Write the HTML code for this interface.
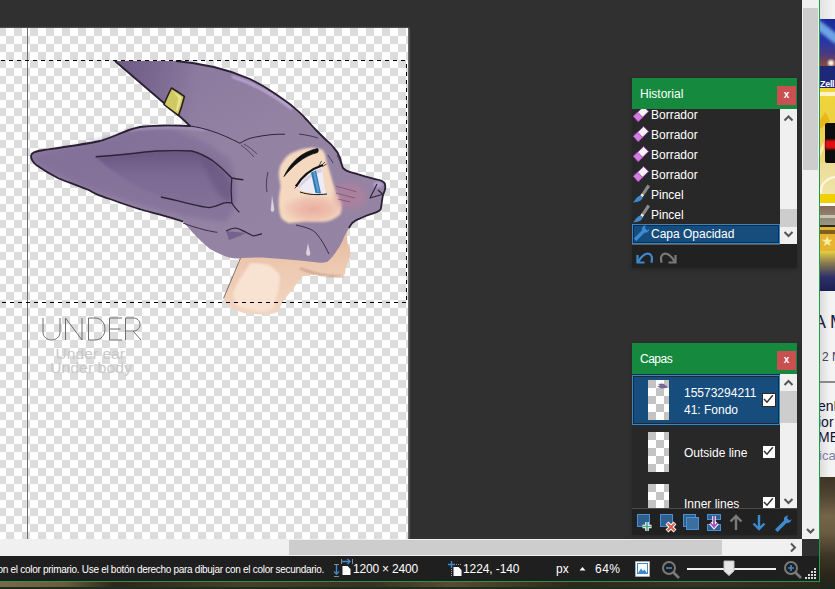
<!DOCTYPE html>
<html><head><meta charset="utf-8">
<style>
*{margin:0;padding:0;box-sizing:border-box}
html,body{width:835px;height:589px;overflow:hidden;background:#3a3526;font-family:"Liberation Sans",sans-serif}
.a{position:absolute}
#ws{left:0;top:0;width:802px;height:539px;background:#303030;overflow:hidden}
#canvas{left:-2px;top:28px;width:410px;height:511px;
 background-color:#dcdcdc;
 background-image:linear-gradient(45deg,#fff 25%,transparent 25%,transparent 75%,#fff 75%),linear-gradient(45deg,#fff 25%,transparent 25%,transparent 75%,#fff 75%);
 background-size:16px 16px;background-position:0 0,8px 8px;
 box-shadow:0 0 2px 0.5px rgba(200,200,200,.55)}
#vscroll{left:802px;top:0;width:17px;height:539px;background:#f0f0f0}
#hscroll{left:0;top:539px;width:802px;height:17px;background:#f0f0f0}
#corner{left:802px;top:539px;width:17px;height:17px;background:#303030}
#status{left:0;top:556px;width:819px;height:25px;background:#1f1f1f;overflow:hidden}
.st{color:#fff;white-space:nowrap;line-height:16px}
#gline{left:0;top:581px;width:820px;height:1px;background:#1e9a48}
#gvline{left:819px;top:0;width:1px;height:582px;background:#1e9a48}
.panel{background:#2a2a2a}
.hdr{background:#158a3e;color:#fff;font-size:12px;height:31px;line-height:33px;padding-left:8px}
.close{width:19px;height:19px;background:#c94f50;color:#fff;font-size:10px;font-weight:bold;text-align:center;line-height:18px}
.item{height:20px;font-size:12px;color:#fff;line-height:22px;padding-left:19px;white-space:nowrap}
.sel{background:#174d7c;border:1px solid #2b8ad6;box-shadow:inset 0 0 0 1px #1c2a36}
.thumb{width:21px;height:40px;background-color:#c4c4c4;background-image:linear-gradient(45deg,#fff 25%,transparent 25%,transparent 75%,#fff 75%),linear-gradient(45deg,#fff 25%,transparent 25%,transparent 75%,#fff 75%);background-size:16px 16px;background-position:0 0,8px 8px}
.lt{font-size:12px;color:#fff;white-space:nowrap;line-height:14px}
.cb{width:12px;height:12px;background:#fff;outline:1px solid #2a2a2a}
.wt{white-space:nowrap;line-height:16px}
</style></head><body>
<div id="ws" class="a">
  <div id="canvas" class="a"></div>
</div>

<svg class="a" style="left:0;top:0" width="835" height="589" viewBox="0 0 835 589">
 <defs>
  <linearGradient id="pg" x1="0" y1="0" x2="1" y2="1">
   <stop offset="0" stop-color="#85729b"/><stop offset="0.5" stop-color="#9482a3"/><stop offset="1" stop-color="#9684a4"/>
  </linearGradient>
  <linearGradient id="eg" x1="0" y1="0" x2="1" y2="0">
   <stop offset="0" stop-color="#8a77a0"/><stop offset="1" stop-color="#6c5886"/>
  </linearGradient>
  <linearGradient id="ng" x1="0" y1="0" x2="0" y2="1">
   <stop offset="0" stop-color="#e3b79c"/><stop offset="0.4" stop-color="#ecc7ae"/><stop offset="1" stop-color="#f2d6c2"/>
  </linearGradient>
  <radialGradient id="blush" cx="0.5" cy="0.5" r="0.5">
   <stop offset="0" stop-color="#e6a096" stop-opacity="0.75"/><stop offset="0.6" stop-color="#e6a096" stop-opacity="0.4"/><stop offset="1" stop-color="#e6a096" stop-opacity="0"/>
  </radialGradient>
  <linearGradient id="spg" gradientUnits="userSpaceOnUse" x1="130" y1="75" x2="198" y2="85">
   <stop offset="0" stop-color="#6e5b85" stop-opacity="0.85"/><stop offset="1" stop-color="#6e5b85" stop-opacity="0"/>
  </linearGradient>
  <linearGradient id="ieg" gradientUnits="userSpaceOnUse" x1="0" y1="152" x2="0" y2="205">
   <stop offset="0" stop-color="#66537f" stop-opacity="0.95"/><stop offset="0.45" stop-color="#76638f" stop-opacity="0.6"/><stop offset="1" stop-color="#7a6892" stop-opacity="0.3"/>
  </linearGradient>
  <filter id="blur1"><feGaussianBlur stdDeviation="1.2"/></filter>
  <filter id="blur2"><feGaussianBlur stdDeviation="2.5"/></filter>
 </defs>
 <g>
 <!-- lower face + neck peach -->
 <path d="M349,225 C346,232 347,240 348,245 C351,250 351,256 349,260 C346,265 345,270 345,274 C343,277 339,277 330,276 C318,274 310,275 303,276 C295,286 287,296 282,303 C280,308 279,311 278,312 C272,314 268,314.5 264,314.5 C255,314.5 250,314 246,313.6 C240,312 235,310 231.6,308.3 C228,305 225,301 223.5,298.4 C230,284 236,270 241.4,256 L300,250 Z" fill="url(#ng)"/>
 <path d="M251,263 C258,263 264,264 269,265 C274,268 278,272 280,276 C280,282 279,287 278,292 C276,298 275,303 273,308 C269,310 265,311 260,312 C252,310 244,308 237,306 C235,302 234,298 233,294 C235,287 238,281 242,276 C245,271 248,266 251,263 Z" fill="#f8e2d2" filter="url(#blur1)"/>
 <path d="M300,268 C310,273 325,276 343,277" fill="none" stroke="#c8937a" stroke-width="1.5" filter="url(#blur1)"/>
 <path d="M223.5,298.4 L241.4,256" fill="none" stroke="#6b4b40" stroke-width="0.8"/>
 <!-- main purple silhouette -->
 <path d="M183,221.6 C176,219 168,217 160,214.7 C150,212 142,210 136,208 C130,206 127,205 124,204 C115,201 107,198 100,195.6 C95,194 91,191 87.5,189.5 C78,186 68,182 58.7,178.5 C50,174 42,169 37,165.5 C33,162.5 31,159 31,156 C31,153 36,151 44,150 C58,148 80,145 100,141 C112,138 125,130 140,127 C155,125 172,125 190,126 C180,116 170,108 165,104 L115,61 L176,61 C200,63 225,68 250,79 C260,84 265,87 271,91 C280,97 286,101 291,105 C298,111 302,114 305,118 C309,122 312,126 316,130 C320,134 323,137 326,140 C330,143 332,145 334,148 C337,151 339,155 340,158 C341,162 342,166 343,168 C345,170 347,171 348.1,171.3 C354,173 360,175 365.8,176.7 C371,178 375,179 379.4,180.1 C382,181 384,182 384.8,183.5 C385.5,186 385.5,188 384.8,190.3 C384,192 383.5,194 382.8,195.8 C382,200 381.5,205 380.7,209.4 C379.5,211 378,211.5 376.6,212.1 C374,213 371,214 368.5,214.8 C365,216 362,217.5 359,218.9 C356,220 354,221.5 352.2,223 C351,224.5 350,226 349,228 C346,233 344,236 343,240 C340,246 338,249 336,252 C333,256 330,260 327,262 C322,263 320,263 318,262.5 C305,261 294,260 282,259 C268,257.5 255,257 242,258 C235,259 230,258 224.6,256 C218,253 214,251 210,249 C205,245 202,242 198.7,238.8 C195,235 193,233 191.6,231.6 C188,227 185,224 183,221.6 Z" fill="url(#pg)"/>
 <!-- spike darker -->
 <path d="M115,61 L176,61 C190,62 205,63 225,68 C215,90 205,110 195,128 L190,126 C180,116 170,108 165,104 Z" fill="url(#spg)"/>
 <!-- ear darker tone -->
 <path d="M31,156 C60,150 100,141 140,128 C170,126 200,135 230,160 C240,190 238,210 225,222 C190,218 150,210 85,187 C55,174 38,165 31,156 Z" fill="#7c6994" opacity="0.55" filter="url(#blur2)"/>
 <!-- top highlight -->
 <path d="M232,76.5 C248,81.5 262,89 271,94.5 C280,100 286,104 292,109" fill="none" stroke="#c6b2e2" stroke-width="2.2" filter="url(#blur1)"/>
 <path d="M125,131 C150,127 180,126 205,130" fill="none" stroke="#a996bf" stroke-width="2" filter="url(#blur1)"/>
 <!-- inner ear dark -->
 <path d="M95.7,156.8 C110,156 120,155 128.3,154 C140,152.5 148,151.5 157,151 C170,150.5 182,150.5 191.5,151 C200,153 207,157 212.6,160.7 C220,166 226,172 231.8,178 C231,185 231,195 231.8,202.8 C227,202.6 224,202.8 224.1,202.8 C220,204.5 215,207 208.8,207.6 C202,207 195,205 185.8,202.8 C178,201 170,199 160.9,197 C130,185 110,170 95.7,156.8 Z" fill="url(#ieg)" filter="url(#blur1)"/>
 <path d="M200,155 C215,162 228,175 232,185 C231,192 231,198 232,203 C222,200 212,190 200,155 Z" fill="#68557f" opacity="0.6" filter="url(#blur2)"/>
 <!-- outline -->
 <path d="M183,221.6 C176,219 168,217 160,214.7 C150,212 142,210 136,208 C130,206 127,205 124,204 C115,201 107,198 100,195.6 C95,194 91,191 87.5,189.5 C78,186 68,182 58.7,178.5 C50,174 42,169 37,165.5 C33,162.5 31,159 31,156 C31,153 36,151 44,150 C58,148 80,145 100,141 C112,138 125,130 140,127 C155,125 172,125 190,126 C180,116 170,108 165,104 L115,61 M176,61 C200,63 225,68 250,79 C260,84 265,87 271,91 C280,97 286,101 291,105 C298,111 302,114 305,118 C309,122 312,126 316,130 C320,134 323,137 326,140 C330,143 332,145 334,148 C337,151 339,155 340,158 C341,162 342,166 343,168 C345,170 347,171 348.1,171.3 C354,173 360,175 365.8,176.7 C371,178 375,179 379.4,180.1 C382,181 384,182 384.8,183.5 C385.5,186 385.5,188 384.8,190.3 C384,192 383.5,194 382.8,195.8 C382,200 381.5,205 380.7,209.4 C379.5,211 378,211.5 376.6,212.1 C374,213 371,214 368.5,214.8 C365,216 362,217.5 359,218.9 C356,220 354,221.5 352.2,223 C351,224.5 350,226 349,228" fill="none" stroke="#2a1f33" stroke-width="1.8" stroke-linejoin="round"/>
 <path d="M95.7,156.8 C110,156 120,155 128.3,154 C140,152.5 148,151.5 157,151 C170,150.5 182,150.5 191.5,151 C200,153 207,157 212.6,160.7 C220,166 226,172 231.8,178 C236,179 240,179.5 243.3,179.8" fill="none" stroke="#2e2236" stroke-width="1.4"/>
 <path d="M231.8,178 C231,185 231,195 231.8,202.8 C234,207 237,210 239.4,212.4" fill="none" stroke="#2e2236" stroke-width="1.2"/>
 <path d="M160.9,197 C170,199 178,201 185.8,202.8 C195,205 202,207 208.8,207.6 C215,207 220,204.5 224.1,202.8 C227,202.5 229.5,202.6 231.8,202.8" fill="none" stroke="#2e2236" stroke-width="1.3"/>
 <path d="M183,223 C190,226 198,228 205,230 C210,231 214,232 217.4,232.3" fill="none" stroke="#3a2c45" stroke-width="1"/>
 <path d="M226,231 C230,229 233,228 236,228 C240,229 243,231 246,232.3 C249,234 251,235 253.4,236 C257,235.5 259,234.5 262,233.8" fill="none" stroke="#2e2236" stroke-width="1.2"/>
 <path d="M226,231 L229,240 L240,236 L246,233 Z" fill="#6c5886" opacity="0.75"/>
 <!-- ear base line inside head -->
 <path d="M190,126 C205,128 220,133 240,143.3" fill="none" stroke="#2e2236" stroke-width="1"/>
 <!-- brow wrinkles -->
 <path d="M239.9,143.3 C245,140 250,138 253.9,137.4 C265,135 275,134 285,134.2" fill="none" stroke="#2e2236" stroke-width="1"/>
 <path d="M241,145 C246,149 250,152 254,157 M244,144 C249,147 253,150 257,154" fill="none" stroke="#3a2c45" stroke-width="0.7"/>
 <path d="M299,134 C306,135 312,136 318,138" fill="none" stroke="#3a2c45" stroke-width="0.9"/>
 <path d="M268,172 C266,180 266,186 267,192" fill="none" stroke="#4a3a55" stroke-width="1"/>
 <!-- face skin patch -->
 <path d="M280.5,165.6 C284,159 288,154 294,152 C300,149.5 305,148 311,147.7 C316,147.5 320,148.5 323,150.3 C325,153 326,157 326.3,160.5 C328,166 330,172 331.4,177.4 C332.5,181 333.5,185 334.8,189.3 C337,194 340,198 341.6,202.9 C342,207 341.5,211 340,214.8 C336,218 331,220.5 326.3,221.6 C319,222 312,221.8 306,221.6 C300,222 294,223 289,223.3 C285,222 282,219.5 280.5,216.5 C279,211 278.5,205 278.8,199.5 C279,195 280,190 280.5,186 C280,182 279,178 278.8,174 C279,171 279.5,168 280.5,165.6 Z" fill="#f4d8c0" filter="url(#blur1)"/>
 <ellipse cx="313" cy="209" rx="32" ry="15" fill="url(#blush)"/>
 <ellipse cx="350" cy="196" rx="16" ry="13" fill="#c27f9a" opacity="0.45" filter="url(#blur2)"/>
 <!-- whisker marks -->
 <path d="M336,186.3 C343,188 350,190 356.3,191.7 M336,193 C343,195 349,196.5 355,198 M338,199 C342,200 346,201 350,202" fill="none" stroke="#7a4a6a" stroke-width="0.9" opacity="0.8"/>
 <!-- nose -->
 <ellipse cx="378" cy="184.5" rx="5" ry="3" fill="#b9a5d2" opacity="0.85" filter="url(#blur1)"/>
 <path d="M377,184 L370,198 L382,194.5" fill="none" stroke="#2e2236" stroke-width="1.1" stroke-linejoin="round"/>
 <path d="M378,190 L382.5,194" fill="none" stroke="#2e2236" stroke-width="1.3"/>
 <path d="M327.7,155 C330,158 332,161 333.2,163.2 M337,155 C339,159 341,163 342,167" fill="none" stroke="#3a2c45" stroke-width="0.8"/>
 <!-- eyebrow -->
 <path d="M284,176.5 C290,163 301,152 317.5,148.5 C318.5,149.5 318.5,151 317.5,152.5 C303,156 293,166 284,176.5 Z" fill="#111" stroke="#111" stroke-width="0.8"/>
 <!-- eye -->
 <path d="M297,185 C303,176 311,170 322,166 C323,175 324,185 326,194 C316,195 306,193 298,189 Z" fill="#efebf5"/>
 <path d="M298,187 C304,178 312,172 321,168 L322,172 C313,175 305,181 299,189 Z" fill="#cfc6dc" opacity="0.7"/>
 <path d="M311,172.5 L316,170.5 L321,193.5 L315.5,193 Z" fill="#2f78b2"/>
 <path d="M313,172 L315,171.5 L319.5,192 L317.5,192.5 Z" fill="#5aa2d6"/>
 <path d="M296,186.5 C302,176 311,169 323,165" fill="none" stroke="#111" stroke-width="2.2"/>
 <path d="M319,166 L321.5,161 M321,166 L325,162 M322.5,166.5 L326.5,164 M297,186 L294.5,188.5 M298,184.5 L295,185.5" stroke="#111" stroke-width="0.7"/>
 <path d="M300,192 C309,195 318,195 327,194" fill="none" stroke="#111" stroke-width="1"/>
 <!-- sweat drops -->
 <path d="M272,195 C273,203 275,208 274,211 C272,213 270,211 271,208 Z" fill="#d8d2dc"/>
 <path d="M308,243 C309,249 311,253 310,255 C308,257 306,255 306,253 Z" fill="#d8d2dc"/>
 <!-- mouth crease -->
 <path d="M296,225 C305,227 312,229 316,233 C322,240 326,248 329,254" fill="none" stroke="#3a2c45" stroke-width="1"/>
 <!-- earring -->
 <path d="M171.5,88 C175,90 181,94 184.4,96.5 C183,102 181,109 178.5,115.5 C174,112 168,108 164,104.5 C166,99 169,93 171.5,88 Z" fill="#cfc964" stroke="#26221a" stroke-width="1.6" stroke-linejoin="round"/>
 <path d="M172.5,91 L181.5,97 C180.5,102 179,107 177.5,111.5 L176,110 C177,105 178,101 178.5,98 Z" fill="#eeea98" opacity="0.8"/>
 </g>
 <!-- guide line -->
 <rect x="27" y="28" width="1" height="511" fill="#707070"/>
 <!-- selection -->
 <line x1="-7" y1="60.5" x2="406" y2="60.5" stroke="#000" stroke-width="1" stroke-dasharray="4 4" stroke-dashoffset="8"/>
 <line x1="-6" y1="302.5" x2="406" y2="302.5" stroke="#000" stroke-width="1" stroke-dasharray="4 4" stroke-dashoffset="8"/>
 <line x1="406.5" y1="60" x2="406.5" y2="302" stroke="#000" stroke-width="1" stroke-dasharray="4 4" stroke-dashoffset="4"/>
 <!-- UNDER text -->
 <g fill="none" stroke="#6e6e6e" stroke-width="1">
  <path d="M43,318 V332 C43,337 47,340 51.5,340 C56,340 60,337 60,332 V318"/>
  <path d="M65.5,340 V318 L82,340 V318"/>
  <path d="M88.5,318 V340 H95 C101,340 105,335 105,329 C105,323 101,318 95,318 Z"/>
  <path d="M122,318 H109.5 V340 H122 M109.5,329 H120.5"/>
  <path d="M125.5,340 V318 H133 C137,318 140,320.5 140,324.5 C140,328.5 137,331 133,331 H125.5 M133,331 L141,340"/>
 </g>
 <text x="55.5" y="358.6" font-family="Liberation Sans" font-size="14.5" fill="#c9c9c9" textLength="69.5" lengthAdjust="spacingAndGlyphs">Under ear</text>
 <text x="50" y="373.3" font-family="Liberation Sans" font-size="14.5" fill="#c9c9c9" textLength="82" lengthAdjust="spacingAndGlyphs">Under body</text>
</svg>
<div id="vscroll" class="a">
  <div class="a" style="left:1px;top:8px;width:15px;height:162px;background:#cdcdcd"></div>
  <svg class="a" style="left:0;top:524px" width="17" height="14"><path d="M5,5 L8.5,8.5 L12,5" fill="none" stroke="#555" stroke-width="2.2"/></svg>
</div>
<div id="hscroll" class="a">
  <div class="a" style="left:289px;top:1px;width:433px;height:15px;background:#cdcdcd"></div>
  <svg class="a" style="left:786px;top:1px" width="16" height="15"><path d="M5,3.5 L9,7.5 L5,11.5" fill="none" stroke="#555" stroke-width="2"/></svg>
</div>
<div id="corner" class="a"></div>
<div id="status" class="a">
  <div class="a st" style="right:495px;top:6px;font-size:10px;letter-spacing:-0.29px">con el color primario. Use el botón derecho para dibujar con el color secundario.</div>
  <svg class="a" style="left:333px;top:0px" width="22" height="24">
    <path d="M8.5,3 V8 M19.5,3 V8 M1,8.5 H6 M1,20.5 H6" stroke="#8a8a8a" stroke-width="1"/>
    <path d="M9,5.5 H17 M14.5,3 L17,5.5 L14.5,8" fill="none" stroke="#3d8ad0" stroke-width="1.3"/>
    <path d="M3.5,9 V18 M1,15.5 L3.5,18 L6,15.5" fill="none" stroke="#3d8ad0" stroke-width="1.3"/>
    <path d="M9.5,10 H14.5 L17.5,13 V19 H9.5 Z" fill="#fff"/>
  </svg>
  <div class="a st" style="left:353px;top:5px;font-size:12px;letter-spacing:-0.2px">1200 × 2400</div>
  <svg class="a" style="left:445px;top:3px" width="20" height="20">
    <path d="M6.5,2 V9 M3,5.5 H10" stroke="#3d8ad0" stroke-width="1.3"/>
    <path d="M11,5.5 H17 M6.5,10 V18" stroke="#9a9a9a" stroke-width="1" stroke-dasharray="1 1"/>
    <path d="M8.5,8 H13.5 L16.5,11 V17 H8.5 Z" fill="#fff"/>
  </svg>
  <div class="a st" style="left:463px;top:5px;font-size:12px;letter-spacing:-0.1px">1224, -140</div>
  <div class="a st" style="left:556px;top:5px;font-size:12px">px</div>
  <svg class="a" style="left:579px;top:10px" width="8" height="6"><path d="M0.5,4.5 L3.5,1 L6.5,4.5 Z" fill="#fff"/></svg>
  <div class="a st" style="left:595px;top:5px;font-size:12px;letter-spacing:0.5px">64%</div>
  <svg class="a" style="left:634px;top:4px" width="18" height="18">
    <rect x="1.5" y="1.5" width="14" height="15" fill="#fff" stroke="#c8c8c8" stroke-width="1" stroke-dasharray="1 1"/>
    <rect x="3.5" y="3.5" width="10" height="10" fill="#fff" stroke="#3d8ad0" stroke-width="1"/>
    <path d="M4,13 L7,8.5 L9,11 L10.5,9.5 L13,13 Z" fill="#3d8ad0"/>
  </svg>
  <svg class="a" style="left:661px;top:4px" width="20" height="20">
    <circle cx="8" cy="8" r="6" fill="none" stroke="#7a7a7a" stroke-width="2"/>
    <path d="M12.5,12.5 L18,18" stroke="#7a7a7a" stroke-width="2.6"/>
    <path d="M5,8 H11" stroke="#3d8ad0" stroke-width="1.6"/>
  </svg>
  <div class="a" style="left:687px;top:12px;width:89px;height:2px;background:#f0f0f0"></div>
  <svg class="a" style="left:723px;top:4px" width="12" height="17">
    <path d="M1,1 H11 V11 L6,15.5 L1,11 Z" fill="#e6e6e6" stroke="#bdbdbd" stroke-width="1"/>
  </svg>
  <svg class="a" style="left:783px;top:4px" width="20" height="20">
    <circle cx="8" cy="8" r="6" fill="none" stroke="#7a7a7a" stroke-width="2"/>
    <path d="M12.5,12.5 L18,18" stroke="#7a7a7a" stroke-width="2.6"/>
    <path d="M5,8 H11 M8,5 V11" stroke="#3d8ad0" stroke-width="1.6"/>
  </svg>
  <svg class="a" style="left:805px;top:11px" width="14" height="14">
    <g fill="#d8d8d8"><rect x="9" y="1" width="2" height="2"/><rect x="6" y="4" width="2" height="2"/><rect x="9" y="4" width="2" height="2"/><rect x="3" y="7" width="2" height="2"/><rect x="6" y="7" width="2" height="2"/><rect x="9" y="7" width="2" height="2"/><rect x="0" y="10" width="2" height="2"/><rect x="3" y="10" width="2" height="2"/><rect x="6" y="10" width="2" height="2"/><rect x="9" y="10" width="2" height="2"/></g>
  </svg>
</div>
<div id="gline" class="a"></div>
<div id="gvline" class="a"></div>

<!-- right web strip -->
<div class="a" style="left:820px;top:0;width:15px;height:589px;background:#3a3426;overflow:hidden">
  <div class="a" style="left:0;top:0;width:15px;height:19px;background:linear-gradient(90deg,#e2e2e2,#f4f4f4)"></div>
  <div class="a" style="left:0;top:19px;width:15px;height:47px;background:linear-gradient(180deg,#1b2a9a 0%,#2336a8 45%,#4a3a80 75%,#8a4a3a 100%)"></div>
  <div class="a" style="left:-6px;top:16px;width:34px;height:9px;background:#7ab8f0;transform:rotate(38deg);transform-origin:0 0;opacity:.85;filter:blur(1.5px)"></div>
  <div class="a" style="left:8px;top:60px;width:6px;height:6px;border-radius:3px;background:#fff6e0;filter:blur(1px)"></div>
  <div class="a" style="left:0;top:66px;width:15px;height:22px;background:#1e2878"></div>
  <div class="a" style="left:0;top:79px;font:bold 9px 'Liberation Sans',sans-serif;color:#fff;line-height:10px;letter-spacing:-0.3px">Zell</div>
  <div class="a" style="left:0;top:88px;width:15px;height:84px;background:linear-gradient(180deg,#f2d638 0%,#ecd040 40%,#ecdc88 100%)"></div>
  <div class="a" style="left:0;top:92px;width:15px;height:4px;background:#fff3c8"></div>
  <div class="a" style="left:0;top:112px;width:10px;height:17px;background:#e8b818;clip-path:polygon(0 45%,55% 0,100% 55%,0 100%)"></div>
  <div class="a" style="left:1px;top:128px;width:3px;height:40px;background:#fff8d8;opacity:.7;transform:rotate(25deg)"></div>
  <div class="a" style="left:5px;top:123px;width:13px;height:40px;background:#0c0c0c;border-radius:2px"></div>
  <div class="a" style="left:5px;top:140px;width:13px;height:9px;background:#e01010;filter:blur(1px)"></div>
  <div class="a" style="left:0;top:163px;width:15px;height:31px;background:linear-gradient(180deg,#ecdc98,#f0e4a8)"></div>
  <div class="a" style="left:0;top:176px;width:34px;height:30px;border-radius:50%;border:2px solid #fff8e0"></div>
  <div class="a" style="left:0;top:194px;width:15px;height:12px;background:#f0d000"></div>
  <div class="a" style="left:0;top:203px;width:15px;height:3px;background:#fff"></div>
  <div class="a" style="left:0;top:206px;width:15px;height:20px;background:linear-gradient(180deg,#8a6a58,#9a9a88)"></div>
  <div class="a" style="left:0;top:215px;width:15px;height:3px;background:#e0e0d0;opacity:.7"></div>
  <div class="a" style="left:0;top:225px;width:15px;height:2px;background:#2a2a20"></div>
  <div class="a" style="left:0;top:227px;width:15px;height:24px;background:#e6b430"></div>
  <div class="a" style="left:0;top:230px;width:15px;height:4px;background:#3a2a10;opacity:.6"></div>
  <div class="a" style="left:1px;top:234px;font-size:14px;color:#f4f0a0;line-height:14px">★</div>
  <div class="a" style="left:0;top:251px;width:15px;height:40px;background:linear-gradient(180deg,#e8d040 0%,#8a7a50 30%,#30306a 65%,#1c2050 100%)"></div>
  <div class="a" style="left:0;top:291px;width:15px;height:186px;background:linear-gradient(90deg,#dcdcdc,#f2f2f2 60%,#f4f4f4)"></div>
  <div class="a wt" style="left:-6px;top:312px;font-size:18px;color:#1a1a40;line-height:20px">A M</div>
  <div class="a wt" style="left:2px;top:349px;font-size:12px;color:#404060">2 N</div>
  <div class="a" style="left:0;top:381px;width:15px;height:2px;background:#8a8a8a"></div>
  <div class="a wt" style="left:-2px;top:399px;font-size:14px;color:#101030;line-height:15.5px">enD<br>ior<br>ME</div>
  <div class="a wt" style="left:-1px;top:448px;font-size:13px;color:#8080a0">ica</div>
  <div class="a" style="left:0;top:477px;width:15px;height:112px;background:linear-gradient(180deg,#3e3426 0%,#4e4230 15%,#746448 35%,#6a5c42 50%,#3e3626 70%,#2a261a 88%,#1c281c 100%)"></div>
</div>
<!-- bottom photo strip -->
<div class="a" style="left:0;top:582px;width:820px;height:7px;background:#1a2e22">
  <div class="a" style="left:0;top:0;width:820px;height:5px;background:linear-gradient(90deg,#7a6848 0%,#6a5a3c 8%,#2e2618 14%,#4a3e28 30%,#3a3020 45%,#5a4a30 55%,#2e2818 70%,#3a3222 85%,#2e2818 100%)"></div>
</div>
<!-- Historial panel -->
<div class="a" style="left:632px;top:78px;width:165px;height:190px;background:#212121;box-shadow:0 1px 4px rgba(0,0,0,.25)">
  <div class="a hdr" style="left:0;top:0;width:165px;">Historial</div>
  <div class="a close" style="left:145px;top:8px;">x</div>
  <div class="a" style="left:0;top:31px;width:148px;height:135px;background:#282828;overflow:hidden">
    <div class="a item" style="top:-5px">Borrador</div>
    <div class="a item" style="top:15px">Borrador</div>
    <div class="a item" style="top:35px">Borrador</div>
    <div class="a item" style="top:55px">Borrador</div>
    <div class="a item" style="top:75px">Pincel</div>
    <div class="a item" style="top:95px">Pincel</div>
    <div class="a item sel" style="top:115px;left:0;width:148px;height:20px;padding-left:18px;line-height:19px">Capa Opacidad</div>
    <svg class="a" style="left:0;top:0" width="148" height="136">
      <g id="eras">
        <polygon points="11.6,-2.4 16.5,2.4 6.2,12.6 1.4,7.3" fill="#f4f4f4" stroke="#a848b8" stroke-width="1"/>
        <polygon points="1.4,7.3 5.7,3.2 10.5,8.3 6.2,12.6" fill="#d080de" stroke="#a848b8" stroke-width="1"/>
      </g>
      <use href="#eras" y="20"/><use href="#eras" y="40"/><use href="#eras" y="60"/>
      <g id="brush">
        <path d="M15.5,75.5 L18,77.5 L12.2,86 L9.8,84.2 Z" fill="#8a8a8a"/>
        <path d="M9.8,84.2 L12.2,86 L10.6,88.2 L8.2,86.4 Z" fill="#e6e6e6"/>
        <path d="M8.2,86.4 C6,87 4.2,88.8 3.2,90.8 C2.7,91.8 2,92.6 0.8,93.2 C4,93.8 7.6,92.6 9.6,90.6 C10.5,89.7 10.8,88.8 10.6,88.2 Z" fill="#3d8ad0"/>
      </g>
      <use href="#brush" y="20"/>
      <path d="M13.8,116.3 C11.2,116.5 9.6,118.9 10.1,121.3 L1.8,129.6 L4.2,132 L12.5,123.7 C15,124.2 17.4,122.4 17.4,119.8 L15.4,121.4 L12.9,118.9 Z" fill="#3d8ad0"/>
    </svg>
  </div>
  <!-- scrollbar -->
  <div class="a" style="left:148px;top:31px;width:17px;height:135px;background:#f0f0f0">
    <div class="a" style="left:0;top:100px;width:17px;height:18px;background:#cdcdcd"></div>
    <svg class="a" style="left:0;top:0" width="17" height="135">
      <path d="M4.5,11.5 L8.5,7.5 L12.5,11.5" fill="none" stroke="#555" stroke-width="2"/>
      <path d="M4.5,123 L8.5,127 L12.5,123" fill="none" stroke="#555" stroke-width="2"/>
    </svg>
  </div>
  <div class="a" style="left:0;top:166px;width:148px;height:1px;background:#5a5a5a"></div>
  <svg class="a" style="left:0;top:167px" width="165" height="23">
    <path d="M6.5,16.5 C9,12 12,9 15.5,8.7 C18.5,8.5 20,11 20,13.5 C20,15.5 19.6,16.8 19.4,17.8" fill="none" stroke="#3d8ad0" stroke-width="2.2"/>
    <path d="M5.5,10 V17.5 H12.5" fill="none" stroke="#3d8ad0" stroke-width="2.2"/>
    <path d="M42.5,16.5 C40,12 37,9 33.5,8.7 C30.5,8.5 29,11 29,13.5 C29,15.5 29.4,16.8 29.6,17.8" fill="none" stroke="#7a7a7a" stroke-width="2.2"/>
    <path d="M43.5,10 V17.5 H36.5" fill="none" stroke="#7a7a7a" stroke-width="2.2"/>
  </svg>
</div>

<!-- Capas panel -->
<div class="a" style="left:632px;top:343px;width:165px;height:192px;background:#212121;box-shadow:0 1px 4px rgba(0,0,0,.25)">
  <div class="a hdr" style="left:0;top:0;width:165px;letter-spacing:-0.5px">Capas</div>
  <div class="a close" style="left:145px;top:8px;">x</div>
  <div class="a" style="left:0;top:31px;width:148px;height:134px;background:#282828;overflow:hidden">
    <div class="a sel" style="left:0;top:1px;width:148px;height:50px"></div>
    <div class="a thumb" style="left:16px;top:6px"><svg class="a" style="left:0;top:0" width="21" height="40"><path d="M10,4 L14,3.5 C16.5,4 18.5,5.5 19.5,7.5 C17.5,8.5 15.5,8 13.5,8.5 C12,8 10.5,7 9,6.5 L12,5.5 Z" fill="#7a6890"/></svg></div>
    <div class="a thumb" style="left:16px;top:58px"></div>
    <div class="a thumb" style="left:16px;top:110px"></div>
    <div class="a lt" style="left:52px;top:12px">15573294211</div>
    <div class="a lt" style="left:52px;top:29px">41: Fondo</div>
    <div class="a lt" style="left:52px;top:72px">Outside line</div>
    <div class="a lt" style="left:52px;top:123px">Inner lines</div>
    <div class="a cb" style="left:131px;top:20px"><svg class="a" style="left:-1px;top:-1px" width="13" height="13"><path d="M2,6 L5,9.2 L10.8,2.2" fill="none" stroke="#333" stroke-width="1.5"/></svg></div>
    <div class="a cb" style="left:131px;top:72px"><svg class="a" style="left:-1px;top:-1px" width="13" height="13"><path d="M2,6 L5,9.2 L10.8,2.2" fill="none" stroke="#333" stroke-width="1.5"/></svg></div>
    <div class="a cb" style="left:131px;top:123px"><svg class="a" style="left:-1px;top:-1px" width="13" height="13"><path d="M2,6 L5,9.2 L10.8,2.2" fill="none" stroke="#333" stroke-width="1.5"/></svg></div>
  </div>
  <div class="a" style="left:148px;top:31px;width:17px;height:134px;background:#f0f0f0">
    <div class="a" style="left:0;top:17px;width:17px;height:32px;background:#cdcdcd"></div>
    <svg class="a" style="left:0;top:0" width="17" height="134">
      <path d="M4.5,11 L8.5,7 L12.5,11" fill="none" stroke="#555" stroke-width="2"/>
      <path d="M4.5,125 L8.5,129 L12.5,125" fill="none" stroke="#555" stroke-width="2"/>
    </svg>
  </div>
  <div class="a" style="left:0;top:165px;width:165px;height:1px;background:#4a4a4a"></div>
  <svg class="a" style="left:0;top:166px" width="165" height="26">
    <rect x="5.5" y="5.5" width="12" height="12" fill="#2f5f8f" stroke="#4a90d0" stroke-width="1"/>
    <path d="M15,13 V22 M10.5,17.5 H19.5" stroke="#fff" stroke-width="3.5"/>
    <path d="M15,13 V22 M10.5,17.5 H19.5" stroke="#4aa88a" stroke-width="1.6"/>
    <rect x="28.5" y="5.5" width="12" height="12" fill="#2f5f8f" stroke="#4a90d0" stroke-width="1"/>
    <path d="M35,14 L43,22 M43,14 L35,22" stroke="#fff" stroke-width="4"/>
    <path d="M35.5,14.5 L42.5,21.5 M42.5,14.5 L35.5,21.5" stroke="#e05a40" stroke-width="2"/>
    <rect x="51.5" y="5.5" width="12" height="12" fill="#2f5f8f" stroke="#4a90d0" stroke-width="1"/>
    <rect x="54.5" y="8.5" width="12" height="12" fill="#3a6fa0" stroke="#4a90d0" stroke-width="1"/>
    <rect x="75.5" y="5.5" width="13" height="5" fill="#2f5f8f" stroke="#4a90d0" stroke-width="1"/>
    <rect x="75.5" y="15.5" width="13" height="6" fill="#2f5f8f" stroke="#4a90d0" stroke-width="1"/>
    <path d="M82,7 V17 M78.5,14 L82,18 L85.5,14" fill="none" stroke="#fff" stroke-width="3.5"/>
    <path d="M82,7 V17 M78.5,14 L82,18 L85.5,14" fill="none" stroke="#9a50c0" stroke-width="1.8"/>
    <path d="M104,21 V7 M98.5,12.5 L104,7 L109.5,12.5" fill="none" stroke="#7a7a7a" stroke-width="2.4"/>
    <path d="M127,6 V20 M121.5,14.5 L127,20 L132.5,14.5" fill="none" stroke="#3d8ad0" stroke-width="2.4"/>
    <path d="M156,6.5 C153,6.5 151.5,9 152,11.5 L143,20.5 L145.5,23 L154.5,14 C157,14.5 159.5,12.5 159.5,10 L157.5,11.5 L155,9 Z" fill="#3d8ad0"/>
  </svg>
</div>
</body></html>
